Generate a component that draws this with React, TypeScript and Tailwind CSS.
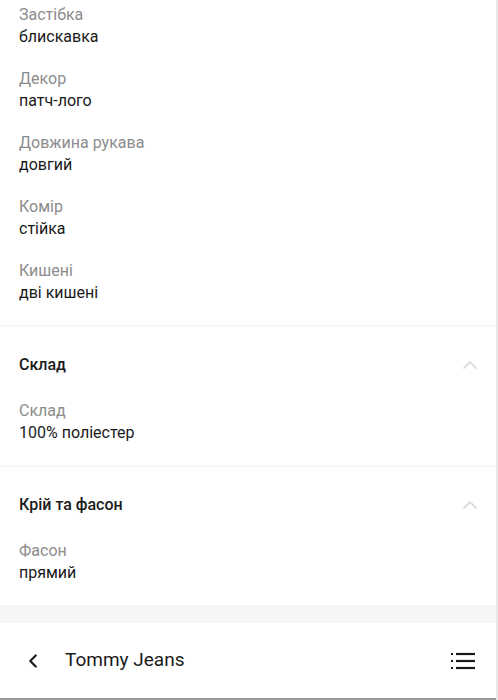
import { ChevronLeft, ChevronUp } from "lucide-react"

const Attr = ({ label, value }: { label: string; value: string }) => (
    <div className="flex flex-col">
        <span className="text-[16px] leading-[22px] text-[#8c8c8c]">{label}</span>
        <span className="text-[16px] leading-[22px] text-[#1a1a1a]">{value}</span>
    </div>
)

const Section = ({ title, items }: { title: string; items: { label: string; value: string }[] }) => (
    <div className="px-[19px] pt-[27px] pb-[21px] border-t-2 border-[#f6f6f6]">
        <div className="flex items-center justify-between h-[22px]">
            <h3 className="text-[16px] font-medium text-[#1a1a1a]">{title}</h3>
            <ChevronUp className="w-[24px] h-[24px] text-[#dcdcdc] mr-[-5px]" strokeWidth={1.8} />
        </div>
        <div className="flex flex-col gap-5 mt-6">
            {items.map((it) => (
                <Attr key={it.label} {...it} />
            ))}
        </div>
    </div>
)

const App = () => {
    const details = [
        { label: "Застібка", value: "блискавка" },
        { label: "Декор", value: "патч-лого" },
        { label: "Довжина рукава", value: "довгий" },
        { label: "Комір", value: "стійка" },
        { label: "Кишені", value: "дві кишені" },
    ]

    return (
        <div
            className="w-[498px] h-[700px] bg-white flex flex-col overflow-hidden border-r-2 border-[#e8e8e8]"
            style={{ fontFamily: "Roboto, 'Noto Sans', sans-serif" }}
        >
            {/* Details list (scrolled) */}
            <div className="px-[19px] pt-1 pb-[21px] flex flex-col gap-5">
                {details.map((d) => (
                    <Attr key={d.label} {...d} />
                ))}
            </div>

            <Section title="Склад" items={[{ label: "Склад", value: "100% поліестер" }]} />
            <Section title="Крій та фасон" items={[{ label: "Фасон", value: "прямий" }]} />

            <div className="h-[18px] bg-[#f6f6f6]" />

            {/* Bottom bar */}
            <div className="flex-1 flex items-center justify-between pl-[22px] pr-[20px] border-b-2 border-[#9a9a9a]">
                <div className="flex items-center gap-[21px]">
                    <ChevronLeft className="w-[22px] h-[22px] text-[#1a1a1a]" strokeWidth={2.4} />
                    <span className="text-[19px] text-[#1a1a1a]">Tommy Jeans</span>
                </div>
                <svg width="26" height="20" viewBox="0 0 26 20" fill="none" stroke="#1a1a1a" strokeWidth="2.2">
                    <line x1="1" y1="3" x2="3" y2="3" />
                    <line x1="6" y1="3" x2="25" y2="3" />
                    <line x1="1" y1="10" x2="3" y2="10" />
                    <line x1="6" y1="10" x2="25" y2="10" />
                    <line x1="1" y1="17" x2="3" y2="17" />
                    <line x1="6" y1="17" x2="25" y2="17" />
                </svg>
            </div>
        </div>
    )
}

export default App
